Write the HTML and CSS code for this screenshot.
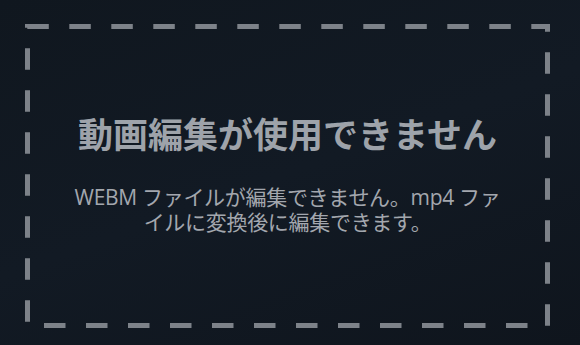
FILE: index.html
```html
<!DOCTYPE html>
<html lang="ja">
<head>
<meta charset="utf-8">
<link rel="stylesheet" href="styles.css">
</head>
<body>
<div class="page">
  <div class="drop">
    <svg class="dash" width="525" height="304" viewBox="0 0 525 304" aria-hidden="true">
      <g stroke="#7d8289" stroke-width="5" fill="none" stroke-dasharray="21.5 20.5">
        <line x1="0" y1="2.5" x2="525" y2="2.5" stroke-dashoffset="39.7"/>
        <line x1="522.5" y1="0" x2="522.5" y2="304" stroke-dashoffset="13.7"/>
        <line x1="0" y1="301.5" x2="505" y2="301.5" stroke-dashoffset="23"/>
        <line x1="2.5" y1="0" x2="2.5" y2="304" stroke-dashoffset="17.7"/>
      </g>
    </svg>
    <div class="msg">
      <h1 class="title">動画編集が使用できません</h1>
      <p class="desc">WEBM ファイルが編集できません。mp4 ファイルに変換後に編集できます。</p>
    </div>
  </div>
</div>
</body>
</html>
```
FILE: styles.css
```css
html, body {
  margin: 0;
  padding: 0;
  height: 100%;
}
body {
  background: linear-gradient(160deg, #10171f 0%, #121a24 50%, #0f151d 100%);
  font-family: "Open Sans", "Noto Sans CJK JP", sans-serif;
}
.page {
  box-sizing: border-box;
  height: 345px;
  padding: 24px 30px 17px 25px;
  display: flex;
}
.drop {
  position: relative;
  flex: 1;
  display: flex;
  align-items: center;
  justify-content: center;
}
.dash {
  position: absolute;
  left: 0;
  top: 0;
}
.msg {
  text-align: center;
  color: #a3a7ae;
  width: 440px;
  padding-bottom: 6px;
}
.title {
  margin: 0 0 30px;
  font-family: "Noto Sans CJK JP", sans-serif;
  font-size: 35px;
  font-weight: 700;
  line-height: 44px;
  color: #9ea3aa;
}
.desc {
  margin: 0;
  font-family: "Open Sans", "Noto Sans CJK JP", sans-serif;
  font-size: 21px;
  line-height: 25px;
  letter-spacing: -0.3px;
}
```
